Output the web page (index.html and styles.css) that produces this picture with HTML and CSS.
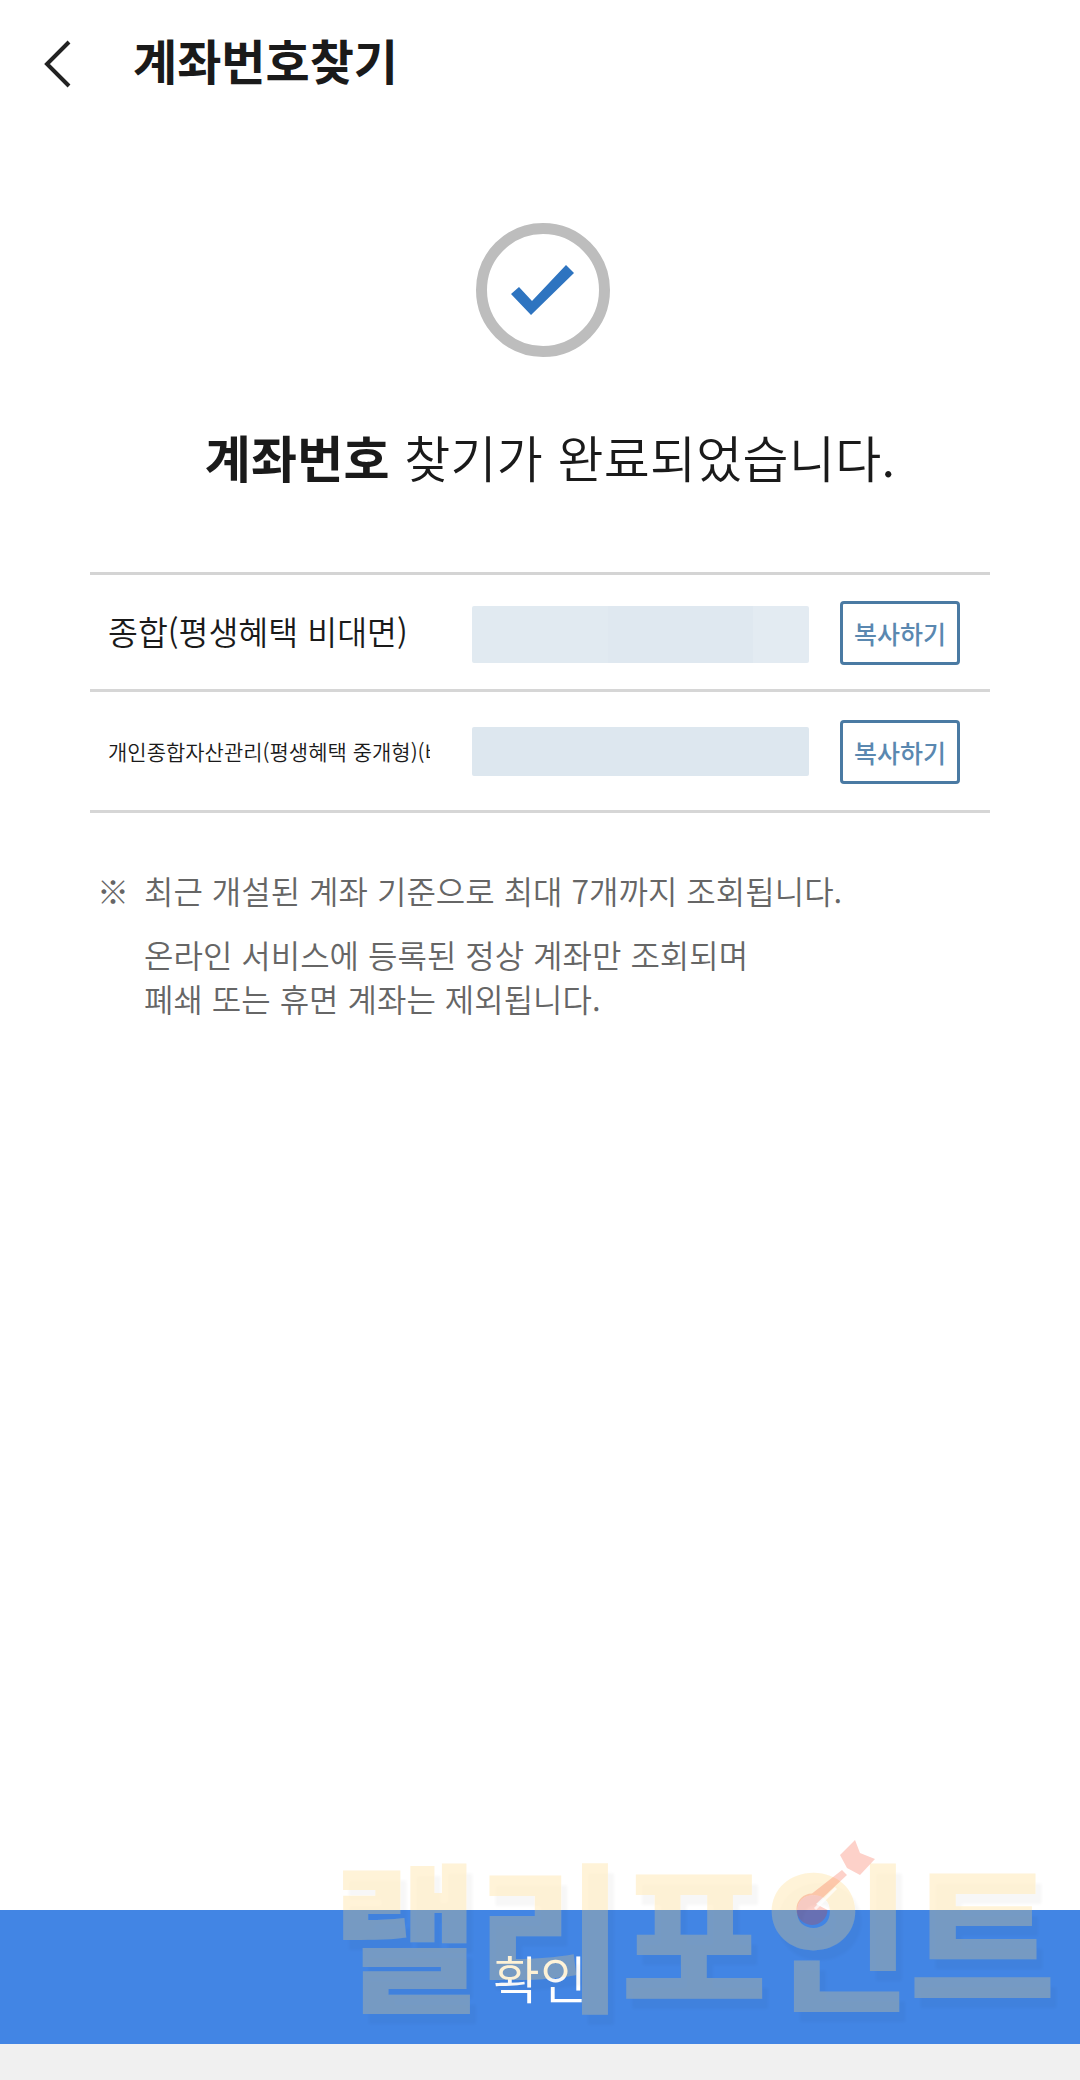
FILE: index.html
```html
<!DOCTYPE html>
<html lang="ko">
<head>
    <meta charset="UTF-8">
    <title>계좌번호찾기</title>
    <link rel="stylesheet" href="styles.css">
</head>
<body>

<div class="page">
    <header class="top-bar">
        <svg class="back-icon" width="28" height="48" viewBox="0 0 28 48">
            <path d="M25 2 L3 24 L25 46" fill="none" stroke="#222" stroke-width="4"/>
        </svg>
        <h1>계좌번호찾기</h1>
    </header>

    <main class="content">
        <div class="done-icon">
            <svg width="64" height="50" viewBox="0 0 64 50">
                <path d="M0 29 L8 22 L21 36 L55 0 L63 8 L20 50 Z" fill="#2e74c0"/>
            </svg>
        </div>

        <p class="done-text"><b>계좌번호</b> 찾기가 완료되었습니다.</p>

        <div class="account-list">
            <div class="account-row first">
                <div class="account-name">종합(평생혜택 비대면)</div>
                <div class="account-number tall">
                    <span class="shade-a"></span><span class="shade-b"></span><span class="shade-c"></span>
                </div>
                <button class="copy-btn">복사하기</button>
            </div>
            <div class="account-row second">
                <div class="account-name small">개인종합자산관리(평생혜택 중개형)(비대면)</div>
                <div class="account-number">
                    <span class="shade-d"></span>
                </div>
                <button class="copy-btn">복사하기</button>
            </div>
        </div>

        <div class="notes">
            <p class="note-first"><span class="mark">※</span>최근 개설된 계좌 기준으로 최대 7개까지 조회됩니다.</p>
            <p class="note-rest">온라인 서비스에 등록된 정상 계좌만 조회되며<br>폐쇄 또는 휴면 계좌는 제외됩니다.</p>
        </div>
    </main>

    <button class="confirm-btn">확인</button>
    <div class="bottom-strip"></div>

    <!-- watermark sits over the button -->
    <svg class="filters" width="0" height="0">
        <filter id="wm-shadow" x="-10%" y="-10%" width="120%" height="130%">
            <feGaussianBlur in="SourceAlpha" stdDeviation="1.500" result="soft"/>
            <feOffset in="soft" dx="6" dy="10" result="moved"/>
            <feComposite in="moved" in2="SourceAlpha" operator="out" result="cut"/>
            <feComponentTransfer in="cut" result="faint">
                <feFuncA type="linear" slope="0.13"/>
            </feComponentTransfer>
            <feMerge>
                <feMergeNode in="faint"/>
                <feMergeNode in="SourceGraphic"/>
            </feMerge>
        </filter>
    </svg>
    <div class="watermark">랠리포인트</div>
    <svg class="arrow" width="90" height="90" viewBox="0 0 90 90">
        <path class="arrow-fill" d="M65 2 L70 15 L85 21 L70 37 L57 30 L50 17 Z M52 32 L57 37 L26 66 L37.500 72 A15.500 15.500 0 0 1 6.500 71 A15.500 15.500 0 0 1 22 55.500 Z"/>
        <path d="M25 71 L46 50" stroke="#fff" stroke-opacity="0.7" stroke-width="3" fill="none"/>
    </svg>
</div>

</body>
</html>
```

FILE: styles.css
```css
body {
    margin: 0;
    padding: 0;
    background-color: #fff;
    font-family: "Noto Sans CJK KR", "Noto Sans", sans-serif;
    color: #1a1a1a;
}
p {
    margin: 0;
}
.page {
    position: relative;
    display: flex;
    flex-direction: column;
    height: 2080px;
    overflow: hidden;
}
.top-bar {
    display: flex;
    align-items: center;
    height: 124px;
    padding-left: 44px;
    gap: 61px;
}
.back-icon {
    margin-top: 4px;
}
.top-bar h1 {
    margin: 0 0 7px;
    font-size: 48px;
    font-weight: 700;
}
.content {
    flex: 1;
    padding: 99px 90px 0;
}
.done-icon {
    display: flex;
    align-items: center;
    justify-content: center;
    box-sizing: border-box;
    width: 134px;
    height: 134px;
    margin-left: 386px;
    border: 11px solid #bdbdbd;
    border-radius: 50%;
}
.done-text {
    margin-top: 61px;
    padding-left: 20px;
    font-size: 50px;
    line-height: 76px;
    letter-spacing: 0.3px;
    text-align: center;
    font-weight: 350;
}
.done-text b {
    font-weight: 700;
}
.account-list {
    margin-top: 78px;
    border-top: 3px solid #d4d4d4;
}
.account-row {
    display: flex;
    align-items: center;
    padding: 0 30px 0 18px;
    border-bottom: 3px solid #d6d6d6;
}
.account-row.first {
    height: 114px;
}
.account-row.first .account-name {
    padding-bottom: 4px;
}
.account-row.second {
    height: 118px;
}
.account-name {
    width: 364px;
    flex: none;
    font-size: 32.500px;
    white-space: nowrap;
    overflow: hidden;
    font-weight: 350;
}
.account-name.small {
    width: 322px;
    margin-right: 42px;
    font-size: 21px;
}
.account-number {
    display: flex;
    width: 337px;
    height: 49px;
    flex: none;
    border-radius: 2px;
    overflow: hidden;
}
.account-number.tall {
    height: 57px;
    margin-top: 4px;
}
.shade-a {
    width: 136px;
    background-color: #e1eaf1;
}
.shade-b {
    width: 145px;
    background-color: #dfe8f0;
}
.shade-c {
    width: 56px;
    background-color: #e3ebf2;
}
.shade-d {
    flex: 1;
    background-color: #dde7ef;
}
.copy-btn {
    box-sizing: border-box;
    width: 120px;
    height: 64px;
    margin-top: 2px;
    margin-left: 31px;
    padding: 0;
    background-color: #fff;
    border: 3px solid #4a7aa3;
    border-radius: 4px;
    color: #5a88b0;
    font-family: inherit;
    font-size: 25px;
    font-weight: 500;
}
.notes {
    margin-top: 55px;
    padding-left: 54px;
    color: #666;
    font-size: 32px;
    line-height: 44px;
    font-weight: 350;
}
.mark {
    display: inline-block;
    width: 47px;
    margin-left: -47px;
}
.note-rest {
    margin-top: 20px;
}
.confirm-btn {
    flex: none;
    height: 134px;
    padding: 0;
    border: 0;
    background-color: #4285e4;
    color: #fff;
    font-family: inherit;
    font-size: 51px;
    font-weight: 350;
}
.bottom-strip {
    flex: none;
    height: 36px;
    background-color: #f0f0f0;
}
.filters {
    position: absolute;
}
.watermark {
    position: absolute;
    left: 332px;
    top: 1824px;
    font-size: 160px;
    line-height: 210px;
    font-weight: 900;
    letter-spacing: -3px;
    white-space: nowrap;
    color: rgba(255, 211, 111, 0.27);
    filter: url(#wm-shadow);
    pointer-events: none;
}
.arrow {
    position: absolute;
    left: 790px;
    top: 1838px;
}
.arrow-fill {
    fill: #f52800;
    opacity: 0.21;
}
```
